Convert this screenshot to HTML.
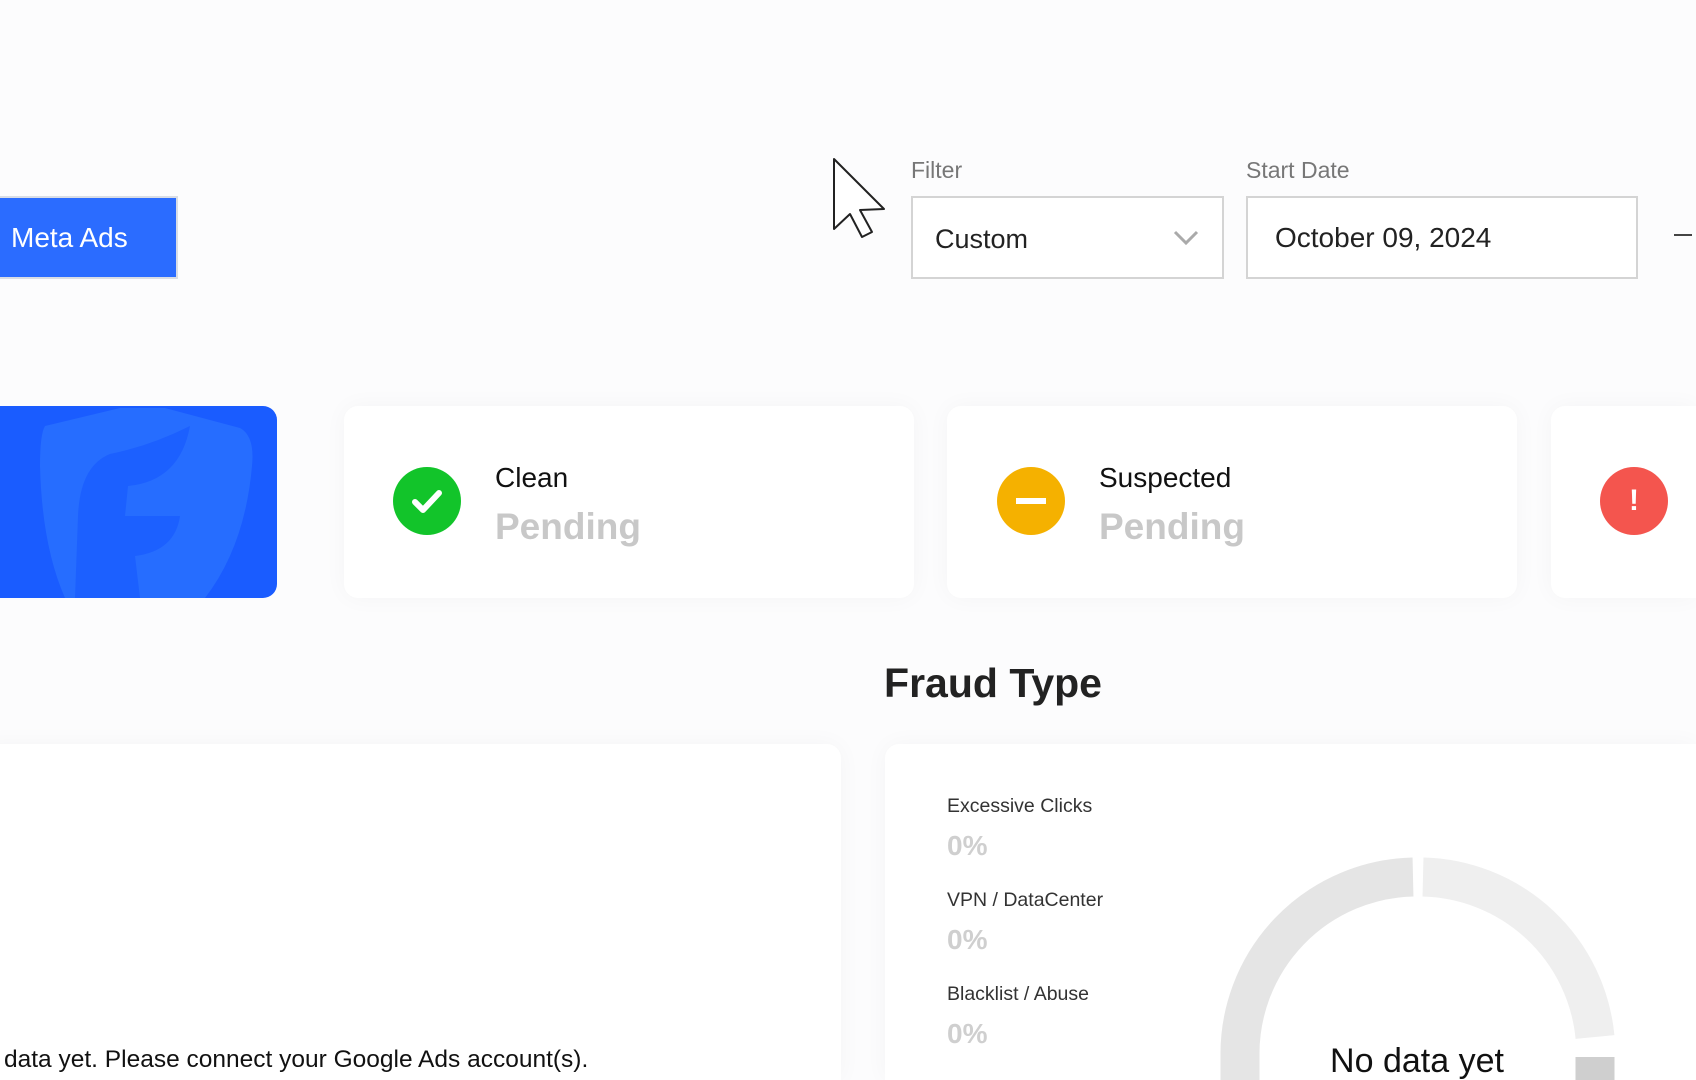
<!DOCTYPE html>
<html style="width:1696px;height:1080px;overflow:hidden"><head><meta charset="utf-8"><style>
*{margin:0;padding:0;box-sizing:border-box}
body{width:1696px;height:1080px;overflow:hidden;background:#fcfcfd;font-family:"Liberation Sans",sans-serif;position:relative;color:#111}
.a{position:absolute}
.card{position:absolute;background:#fff;border-radius:14px;box-shadow:0 0 24px rgba(0,0,0,0.035)}
.lbl{font-size:23px;color:#777}
.box{border:2px solid #d4d4d4;background:#fff}
.ic{position:absolute;width:68px;height:68px;border-radius:50%}
.t1{font-size:28px;color:#111}
.t2{font-size:37px;font-weight:bold;color:#c8c8c8}
.s1{font-size:19.5px;color:#333}
.s2{font-size:28px;font-weight:bold;color:#cfcfcf}
</style></head><body>
<div class="a" style="left:0;top:196px;width:178px;height:83px;background:#2b6cff;border:2px solid #d9dde5;border-left:none;color:#fff;font-size:28px;line-height:79px;padding-left:11px">Meta Ads</div>

<svg class="a" style="left:832px;top:157px" width="58" height="84" viewBox="0 0 58 84"><path d="M2 2 L2 72 L18 57 L30 80 L40 75 L28 53 L52 52 Z" fill="#fff" stroke="#222" stroke-width="2" stroke-linejoin="round"/></svg>

<div class="a lbl" style="left:911px;top:157px">Filter</div>
<div class="a box" style="left:911px;top:196px;width:313px;height:83px"><span class="a" style="left:22px;top:26px;font-size:27px;color:#222">Custom</span>
<svg class="a" style="left:260px;top:32px" width="26" height="16" viewBox="0 0 26 16"><path d="M2 2 L13 13 L24 2" fill="none" stroke="#aaa" stroke-width="3"/></svg></div>
<div class="a lbl" style="left:1246px;top:157px">Start Date</div>
<div class="a box" style="left:1246px;top:196px;width:392px;height:83px"><span class="a" style="left:27px;top:24px;font-size:28px;color:#222">October 09, 2024</span></div>
<div class="a" style="left:1674px;top:234px;width:18px;height:2px;background:#444"></div>

<div class="a" style="left:0;top:406px;width:277px;height:192px;background:#1a5cff;border-radius:0 14px 14px 0;overflow:hidden">
<svg width="277" height="192" viewBox="0 0 277 192"><path d="M45 20 L120 2 L165 2 L240 22 Q255 30 252 60 Q245 140 205 192 L65 192 Q42 140 40 60 Q40 28 45 20Z" fill="#2e78ff" opacity="0.6"/><path d="M190 20 Q150 40 110 48 Q80 60 78 110 L75 192 L140 192 L135 150 Q175 145 180 110 L125 110 L128 80 Q180 75 190 20Z" fill="#1a5cff" opacity="0.8"/></svg></div>

<div class="card" style="left:344px;top:406px;width:570px;height:192px"></div>
<div class="ic" style="left:393px;top:467px;background:#12c42a"><svg width="68" height="68" viewBox="0 0 68 68"><path d="M22 35 L30 43 L46 26" fill="none" stroke="#fff" stroke-width="6" stroke-linecap="round" stroke-linejoin="round"/></svg></div>
<div class="a t1" style="left:495px;top:462px">Clean</div>
<div class="a t2" style="left:495px;top:506px">Pending</div>

<div class="card" style="left:947px;top:406px;width:570px;height:192px"></div>
<div class="ic" style="left:997px;top:467px;background:#f5b100"><div class="a" style="left:19px;top:31px;width:30px;height:6px;background:#fff"></div></div>
<div class="a t1" style="left:1099px;top:462px">Suspected</div>
<div class="a t2" style="left:1099px;top:506px">Pending</div>

<div class="card" style="left:1551px;top:406px;width:145px;height:192px;border-radius:14px 0 0 14px"></div>
<div class="ic" style="left:1600px;top:467px;background:#f4554e;color:#fff;font-weight:bold;font-size:30px;text-align:center;line-height:68px">!</div>

<div class="a" style="left:0;width:1986px;top:660px;text-align:center;font-size:41px;font-weight:bold;color:#222">Fraud Type</div>

<div class="card" style="left:-20px;top:744px;width:861px;height:336px;border-radius:14px 14px 0 0"></div>
<div class="card" style="left:885px;top:744px;width:811px;height:336px;border-radius:14px 0 0 0"></div>
<div class="a" style="left:4px;top:1046px;font-size:24.5px;color:#111">data yet. Please connect your Google Ads account(s).</div>

<div class="a s1" style="left:947px;top:795px">Excessive Clicks</div>
<div class="a s2" style="left:947px;top:830px">0%</div>
<div class="a s1" style="left:947px;top:889px">VPN / DataCenter</div>
<div class="a s2" style="left:947px;top:924px">0%</div>
<div class="a s1" style="left:947px;top:983px">Blacklist / Abuse</div>
<div class="a s2" style="left:947px;top:1018px">0%</div>

<svg class="a" style="left:1210px;top:847px" width="420" height="233" viewBox="0 0 420 233">
<path d="M203 30 A177 177 0 0 0 30 210 L30 240" fill="none" stroke="#e5e5e5" stroke-width="39"/>
<path d="M213 30 A177 177 0 0 1 385 190" fill="none" stroke="#efefef" stroke-width="39"/>
<path d="M385 210 L385 240" fill="none" stroke="#cfcfcf" stroke-width="39"/>
</svg>
<div class="a" style="left:1317px;top:1042px;width:200px;text-align:center;font-size:34px;color:#111">No data yet</div>
</body></html>
